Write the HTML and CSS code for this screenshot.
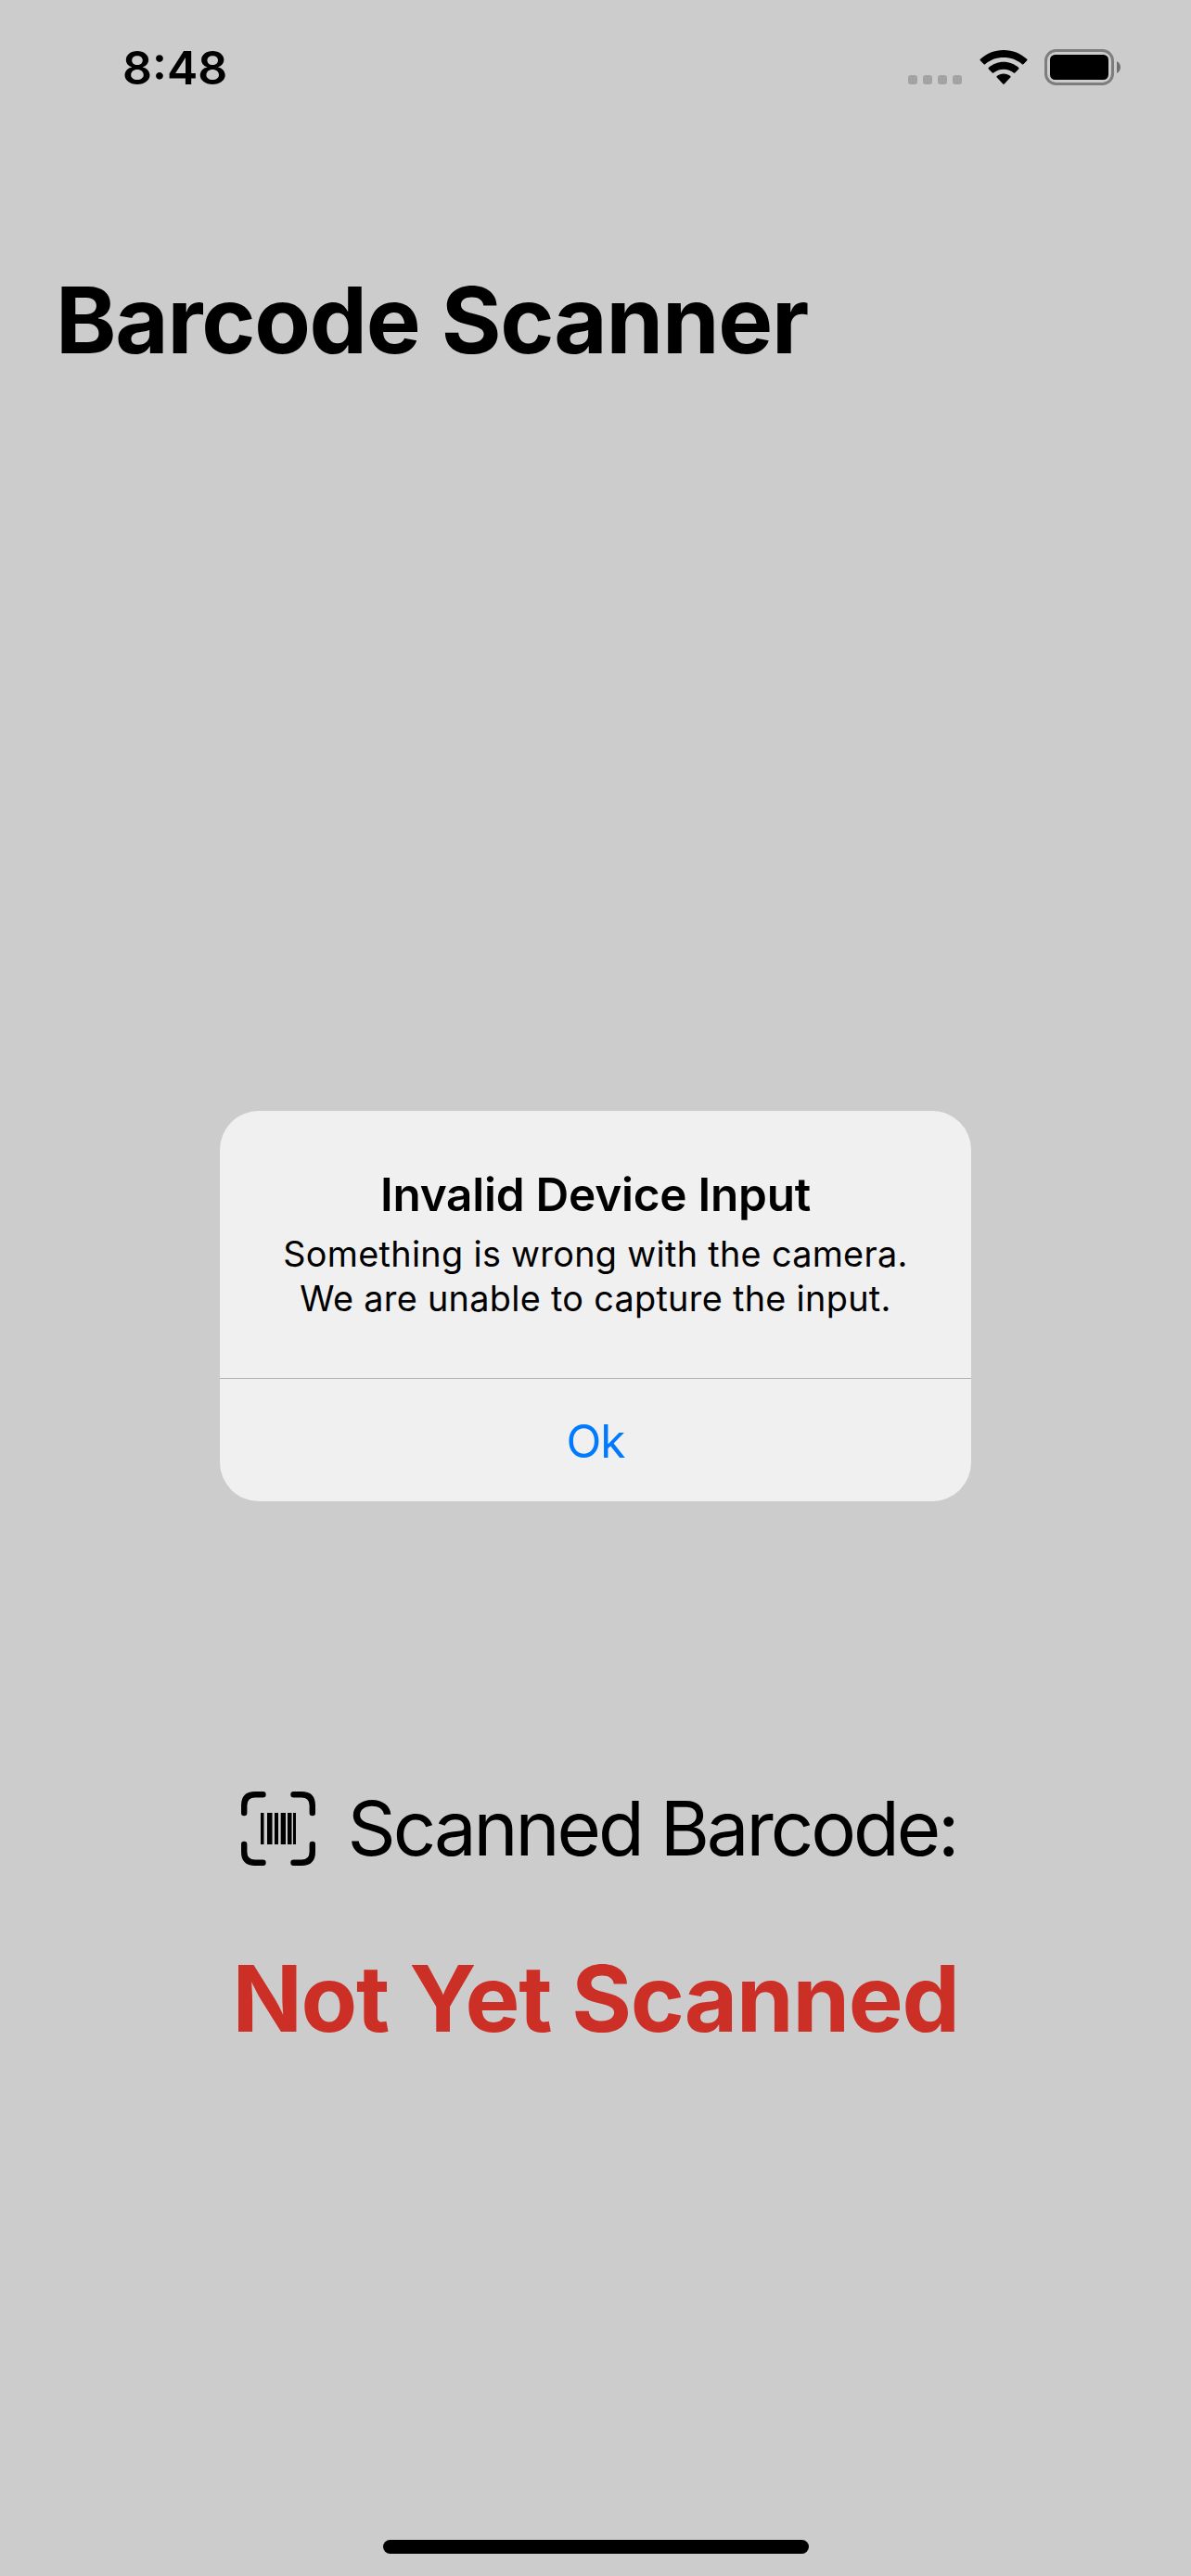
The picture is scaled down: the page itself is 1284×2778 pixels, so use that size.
FILE: index.html
```html
<!DOCTYPE html>
<html lang="en">
<head>
<meta charset="utf-8">
<title>Barcode Scanner</title>
<link rel="stylesheet" href="styles.css">
</head>
<body>
<div class="screen">
  <header class="status-bar">
    <span class="time">8:48</span>
    <div class="status-icons">
      <div class="signal"><i></i><i></i><i></i><i></i></div>
      <svg class="wifi" width="52" height="38" viewBox="0 0 52 38">
        <path d="M26 0C35.800 0 44.500 3.700 51.200 9.800Q51.900 10.500 51.200 11.200L47.300 15.200Q46.600 15.900 45.900 15.200C40.700 10.600 33.700 8 26 8C18.300 8 11.300 10.600 6.100 15.200Q5.400 15.900 4.700 15.200L.8 11.200Q.1 10.500 .8 9.800C7.500 3.700 16.200 0 26 0Z"/>
        <path d="M26 12.800C32.200 12.800 37.900 15.200 42.200 19Q42.900 19.700 42.200 20.400L38.200 24.500Q37.500 25.100 36.800 24.500C33.900 22.100 30.200 20.700 26 20.700C21.800 20.700 18.100 22.100 15.200 24.500Q14.500 25.100 13.800 24.500L9.800 20.400Q9.100 19.700 9.800 19C14.100 15.200 19.800 12.800 26 12.800Z"/>
        <path d="M26 25.600C28.800 25.600 31.300 26.500 33.300 28.100Q34 28.800 33.300 29.500L26.700 36.600Q26 37.300 25.300 36.600L18.700 29.500Q18 28.800 18.700 28.100C20.700 26.500 23.200 25.600 26 25.600Z"/>
      </svg>
      <svg class="battery" width="82" height="39" viewBox="0 0 82 39">
        <rect class="shell" x="1.500" y="1.500" width="72" height="36" rx="11"/>
        <rect x="6" y="6" width="63" height="27" rx="5.500"/>
        <path class="nub" d="M78 13C83.300 15.500 83.300 23.500 78 26Z"/>
      </svg>
    </div>
  </header>
  <main class="content">
    <h1 class="title">Barcode Scanner</h1>
    <div class="camera"></div>
    <div class="label">
      <svg class="scan" width="80" height="80" viewBox="0 0 80 80">
        <path class="frame" d="M3.200 23V15Q3.200 3.200 15 3.200H23.500M56.500 3.200H65Q76.800 3.200 76.800 15V23M76.800 57V65Q76.800 76.800 65 76.800H56.500M23.500 76.800H15Q3.200 76.800 3.200 65V57"/>
        <path d="M21 23H24.500V57H21ZM28 23H33.500V57H28ZM36 23H40V57H36ZM42.700 23H48V57H42.700ZM50 23H54.500V57H50ZM56 23H59V57H56Z"/>
      </svg>
      <span class="label-text">Scanned Barcode:</span>
    </div>
    <p class="result">Not Yet Scanned</p>
  </main>
  <div class="home-indicator"></div>
</div>
<div class="overlay">
  <section class="alert">
    <div class="alert-body">
      <h2 class="alert-title">Invalid Device Input</h2>
      <p class="alert-message">Something is wrong with the camera.<br>We are unable to capture the input.</p>
    </div>
    <button class="alert-button">Ok</button>
  </section>
</div>
</body>
</html>
```

FILE: styles.css
```css
* { box-sizing: border-box; }

body {
  margin: 0;
  background: #ccc;
  color: #000;
  font-family: Inter, "Liberation Sans", sans-serif;
}

h1, h2, p { margin: 0; }
svg { display: block; flex: none; }

.screen {
  display: flex;
  flex-direction: column;
  width: 1284px;
  height: 2778px;
}

.status-bar {
  display: flex;
  justify-content: space-between;
  height: 141px;
  padding: 43px 76px 0 132px;
}

.time {
  font-size: 50px;
  line-height: 60px;
  font-weight: 600;
}

.status-icons { display: flex; padding-top: 10px; }

.signal { display: flex; gap: 6px; padding-top: 28px; margin-right: 19px; }
.signal i { width: 10px; height: 10px; border-radius: 3px; background: #a3a3a3; }

.wifi { margin: 1px 18px 0 0; }
.shell { fill: none; stroke: #7d7d7d; stroke-width: 3; }
.nub { fill: #707070; }

.content {
  display: flex;
  flex: 1;
  flex-direction: column;
  align-items: center;
  padding-top: 144px;
}

.title {
  align-self: flex-start;
  padding-left: 60px;
  font-size: 99px;
  line-height: 120px;
  font-weight: 700;
  letter-spacing: -1.244px;
  word-spacing: 1px;
}

.camera { height: 1517px; }

.label {
  display: flex;
  align-items: center;
  gap: 34px;
  height: 100px;
  padding-left: 8px;
}

.frame { fill: none; stroke: #000; stroke-width: 6.4; stroke-linecap: round; }

.label-text {
  font-size: 81.4px;
  line-height: 100px;
  letter-spacing: -3.05px;
  white-space: nowrap;
}

.result {
  margin-top: 73px;
  color: #cc2f26;
  font-size: 99px;
  line-height: 120px;
  font-weight: 700;
  letter-spacing: -1.27px;
}

.home-indicator {
  align-self: center;
  width: 459px;
  height: 15px;
  margin-bottom: 24px;
  border-radius: 8px;
  background: #000;
}

.overlay {
  position: absolute;
  top: 0;
  left: 0;
  display: flex;
  justify-content: center;
  align-items: center;
  width: 1284px;
  height: 2778px;
  padding-top: 39px;
}

.alert {
  width: 810px;
  height: 421px;
  overflow: hidden;
  border-radius: 42px;
  background: #f0f0f0;
  text-align: center;
}

.alert-body { height: 288px; padding-top: 60px; }

.alert-title {
  font-size: 49.5px;
  line-height: 60px;
  font-weight: 600;
  letter-spacing: -0.24px;
}

.alert-message {
  margin-top: 10px;
  font-size: 37.8px;
  line-height: 48px;
  letter-spacing: 0.31px;
}

.alert-button {
  display: block;
  width: 100%;
  height: 133px;
  padding: 1px 0 0;
  border: 0;
  border-top: 1px solid #b0b0b0;
  background: none;
  color: #007aff;
  font: 400 49.5px/132px Inter, "Liberation Sans", sans-serif;
  letter-spacing: -1px;
}
```
